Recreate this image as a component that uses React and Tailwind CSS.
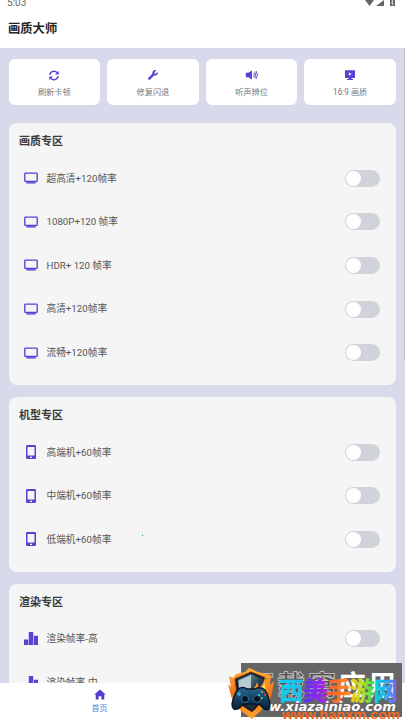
import React from "react";

const quick = [
  { icon: "refresh", label: "刷新卡顿" },
  { icon: "wrench", label: "修复闪退" },
  { icon: "volume", label: "听声辨位" },
  { icon: "ratio", label: "16:9 画质" },
];

const sections = [
  { title: "画质专区", icon: "monitor", rows: ["超高清+120帧率", "1080P+120 帧率", "HDR+ 120 帧率", "高清+120帧率", "流畅+120帧率"] },
  { title: "机型专区", icon: "phone", rows: ["高端机+60帧率", "中端机+60帧率", "低端机+60帧率"] },
  { title: "渲染专区", icon: "bars", rows: ["渲染帧率-高", "渲染帧率-中"] },
];

function Glyph({ name }) {
  switch (name) {
    case "refresh":
      return (
        <svg viewBox="0 0 12 12" className="h-[11px] w-3" fill="none" stroke="currentColor" strokeWidth="1.5">
          <path d="M1.4 5.2A4.6 4.5 0 0 1 9.6 3.2M10.6 6.8A4.6 4.5 0 0 1 2.4 8.8" />
          <path d="M11.2 1v4H7.2ZM.8 11V7H4.8Z" fill="currentColor" stroke="none" />
        </svg>
      );
    case "wrench":
      return (
        <svg viewBox="0 0 512 512" className="size-[10px]" fill="currentColor">
          <path d="M507 116c-2-9-14-12-20-5l-75 75-68-11-11-68 75-75c7-7 4-18-5-20C337-8 262 25 234 87c-15 33-18 68-9 101L19 394c-25 25-25 66 0 91s66 25 91 0l206-206c69 17 141-15 174-76 14-27 22-58 17-87Z" />
        </svg>
      );
    case "volume":
      return (
        <svg viewBox="0 0 14 12" className="h-3 w-[14px]" fill="none" stroke="currentColor" strokeWidth=".9">
          <path d="M.8 3.8H3.3L7 1.5V10.5L3.3 8.2H.8Z" fill="currentColor" stroke="none" />
          <path d="M8.5 4Q10 6 8.5 8M9.8 2.9Q11.8 6 9.8 9.1M11 1.9Q14 6 11 10.1" />
        </svg>
      );
    case "ratio":
      return (
        <svg viewBox="0 0 12 12" className="size-3" fill="currentColor">
          <path fillRule="evenodd" d="M1 1.2H11V9H7.5V10H9V11H3V10H4.5V9H1ZM4.9 3.4V6.8L7.6 5Z" />
        </svg>
      );
    case "monitor":
      return (
        <svg viewBox="0 0 14 12" className="h-3 w-[14px]" fill="none" stroke="currentColor" strokeWidth="1.35">
          <rect x=".8" y="1.1" width="12.4" height="8.4" rx=".8" />
          <path d="M2.5 10.9H11.5" />
        </svg>
      );
    case "phone":
      return (
        <svg viewBox="0 0 10 14" className="h-[14px] w-[10px]" fill="currentColor">
          <path fillRule="evenodd" d="M1.3 0H8.7Q10 0 10 1.3V12.7Q10 14 8.7 14H1.3Q0 14 0 12.7V1.3Q0 0 1.3 0ZM1.5 2V10.5H8.5V2ZM4 11.7V13H6V11.7Z" />
        </svg>
      );
    case "bars":
      return (
        <svg viewBox="0 0 14 13" className="h-[13px] w-[14px]" fill="currentColor">
          <path d="M0 7.5H4.2V13H0ZM4.8 0H9.2V13H4.8ZM9.8 3.8H14V13H9.8Z" />
        </svg>
      );
    default:
      return null;
  }
}

function Toggle() {
  return (
    <div className="flex h-[17px] w-[35px] items-center rounded-full bg-[#d1d3db] px-px">
      <div className="size-[15px] rounded-full bg-white" />
    </div>
  );
}

function Section({ title, icon, rows }) {
  return (
    <section className="shrink-0 rounded-lg bg-[#f5f5f6] px-[10px] pt-[10px]" style={{ height: rows.length * 43.7 + 43.5 }}>
      <h2 className="text-[11px] leading-[18px] font-bold text-[#3b3b3b]">{title}</h2>
      <div className="pt-[5.5px]">
        {rows.map((row) => (
          <div key={row} className="flex h-[43.6px] items-center pr-[6px] pl-[4px]">
            <div className="flex w-[15px] justify-center text-[#5543d2]"><Glyph name={icon} /></div>
            <span className="ml-[8.5px] flex-1 pt-px text-[9.7px] whitespace-nowrap text-[#555]">{row}</span>
            <Toggle />
          </div>
        ))}
      </div>
    </section>
  );
}

function Emblem() {
  return (
    <svg viewBox="0 0 48 52" className="absolute top-[5px] left-0 h-[52px] w-12">
      <defs>
        <linearGradient id="flame" x2="0" y2="1"><stop stopColor="#ffb13b" /><stop offset=".5" stopColor="#f27218" /><stop offset="1" stopColor="#ffa229" /></linearGradient>
        <linearGradient id="steel" x2="1" y2="1"><stop stopColor="#9fc1cd" /><stop offset=".5" stopColor="#244455" /><stop offset="1" stopColor="#111827" /></linearGradient>
        <linearGradient id="pad" x2="0" y2="1"><stop stopColor="#246991" /><stop offset=".5" stopColor="#154264" /><stop offset="1" stopColor="#071b36" /></linearGradient>
      </defs>
      <path d="M21 0L30 4L43 7L42 17L46 13L44 25L41 35L24 51L8 39L3 28L0 16L3 19L1 8L5 10L8 6L17 4Z" fill="url(#flame)" />
      <path d="M23 4L38 10V28L24 45L10 34L7 11Z" fill="#18202a" stroke="#793114" />
      <path d="M23 6L36 12V27L24 42L12 31L10 12Z" fill="url(#steel)" />
      <path d="M23 7V22H11V13Z" fill="#b8cbd0" />
      <path d="M22 23Q28 20 29 14Q31 17 30 21Q37 15 37 8Q43 18 38 27L30 31Z" fill="#ff911e" />
      <path d="M30 23Q36 20 36 14Q39 22 34 29Z" fill="#ffe36a" />
      <path d="M24 44L33 38L24 49L14 39Z" fill="#ff9a27" />
      <path d="M10 21Q15 18 19 21H27Q32 18 37 22Q41 28 42 37Q41 44 36 41L31 36H16L10 41Q4 43 4 36Q6 26 10 21Z" fill="url(#pad)" stroke="#071323" strokeWidth="1.3" />
      <circle cx="17" cy="31" r="3.6" fill="#071525" stroke="#2c6b8f" />
      <circle cx="29" cy="31" r="3.6" fill="#071525" stroke="#2c6b8f" />
      <path d="M11 24V28M9 26H13" stroke="#49a6c5" strokeWidth="1.5" />
      <circle cx="34" cy="24" r="1" fill="#fb923c" /><circle cx="37" cy="27" r="1" fill="#e53d31" /><circle cx="31" cy="27" r="1" fill="#4bd5e8" /><circle cx="34" cy="30" r="1" fill="#85d83c" />
    </svg>
  );
}

const brand = [
  { char: "西", x: 51, fill: "url(#cyan)" },
  { char: "美", x: 75, fill: "url(#violet)" },
  { char: "手", x: 98.5, fill: "url(#orange)" },
  { char: "游", x: 122, fill: "url(#lime)" },
  { char: "网", x: 145.5, fill: "url(#aqua)" },
];

function Watermark() {
  return (
    <div className="absolute right-0 bottom-0 h-[57px] w-[177px] overflow-hidden">
      <div className="absolute top-0 right-[3px] h-[54px] w-[161px] bg-[#666667]" />
      <svg viewBox="0 0 177 57" className="absolute inset-0 h-full w-full">
        <defs>
          <linearGradient id="cyan"><stop stopColor="#00cff0" /><stop offset="1" stopColor="#27bdea" /></linearGradient>
          <linearGradient id="violet"><stop stopColor="#5935ef" /><stop offset="1" stopColor="#b51cf2" /></linearGradient>
          <linearGradient id="orange"><stop stopColor="#ff5638" /><stop offset="1" stopColor="#ff9416" /></linearGradient>
          <linearGradient id="lime"><stop stopColor="#ffc416" /><stop offset=".5" stopColor="#b8e428" /><stop offset="1" stopColor="#2cda55" /></linearGradient>
          <linearGradient id="aqua"><stop stopColor="#09d8d8" /><stop offset=".55" stopColor="#24a9f5" /><stop offset="1" stopColor="#9351f0" /></linearGradient>
        </defs>
        <g className="font-['Noto_Sans_CJK_SC',sans-serif] font-bold">
          <text x="18" y="33" fontSize="28" textLength="90" fill="#555" stroke="#c9c9c9" strokeWidth=".8">下载窝</text>
          <text x="110" y="33" fontSize="28" textLength="58" fill="#fff">应用</text>
          {brand.map(({ char, x, fill }) => (
            <text key={char} x={x} y="37" fontSize="24.5" fill={fill} stroke={fill} strokeWidth=".5">{char}</text>
          ))}
        </g>
        <text x="41" y="47.5" fontSize="13" textLength="127" lengthAdjust="spacingAndGlyphs" fill="#fff" className="font-['DejaVu_Sans'] font-bold italic">w.xiazainiao.com</text>
        <text x="54" y="56" fontSize="13.5" textLength="118" lengthAdjust="spacingAndGlyphs" fill="#f26a21" className="font-['Liberation_Sans'] font-bold">www.hanxm.com</text>
      </svg>
      <Emblem />
    </div>
  );
}

export default function App() {
  return (
    <div className="relative flex h-[720px] w-[405px] flex-col overflow-hidden bg-[#d8daeb] font-[Roboto,'Noto_Sans_CJK_SC',sans-serif]">
      <header className="h-12 shrink-0 bg-white">
        <div className="flex h-[10px] items-start justify-between overflow-hidden pr-[9px] pl-[7px] text-[#666]">
          <span className="-mt-[3.5px] text-[10px] leading-[12px]">5:03</span>
          <svg viewBox="0 0 31 7" className="h-[7px] w-[31px]" fill="currentColor">
            <path d="M0 0H9L4.5 6ZM11 6L19 0V6ZM25 0H30V6H25Z" />
            <path d="M28 0L26.7 3H28L27 5" stroke="white" strokeWidth=".8" fill="none" />
          </svg>
        </div>
        <h1 className="pt-px pl-2 text-[12.3px] leading-[37px] font-bold text-[#252525]">画质大师</h1>
      </header>
      <main className="flex min-h-0 flex-1 flex-col overflow-hidden px-[9px] pt-[11px]">
        <div className="-ml-[.5px] grid shrink-0 grid-cols-4 gap-[7px]">
          {quick.map(({ icon, label }) => (
            <div key={label} className="flex h-[46px] flex-col items-center rounded-md bg-white pt-[10px] text-[#5543d2]">
              <div className="flex h-3 items-center"><Glyph name={icon} /></div>
              <span className="mt-[4px] text-[8.2px] leading-[14px] text-[#777]">{label}</span>
            </div>
          ))}
        </div>
        <div className="mt-[18px] flex flex-col gap-[12px]">
          {sections.map((section) => <Section key={section.title} {...section} />)}
        </div>
      </main>
      <nav className="flex h-[37px] shrink-0 flex-col items-center bg-white pt-[6px] pr-[206px]">
        <svg viewBox="0 0 12 11" className="h-[11px] w-3 text-[#5040ce]" fill="currentColor"><path d="M6 .5L11.7 5.5H10.3V10.5H7.4V7.2H4.6V10.5H1.7V5.5H.3Z" /></svg>
        <span className="mt-[3px] text-[8px] leading-[12px] text-[#4688df]">首页</span>
      </nav>
      <div className="absolute top-12 right-0 h-[312px] w-px bg-[#bfc1d5]" />
      <div className="absolute top-[535px] left-[142px] size-px bg-[#159768]" />
      <Watermark />
    </div>
  );
}
